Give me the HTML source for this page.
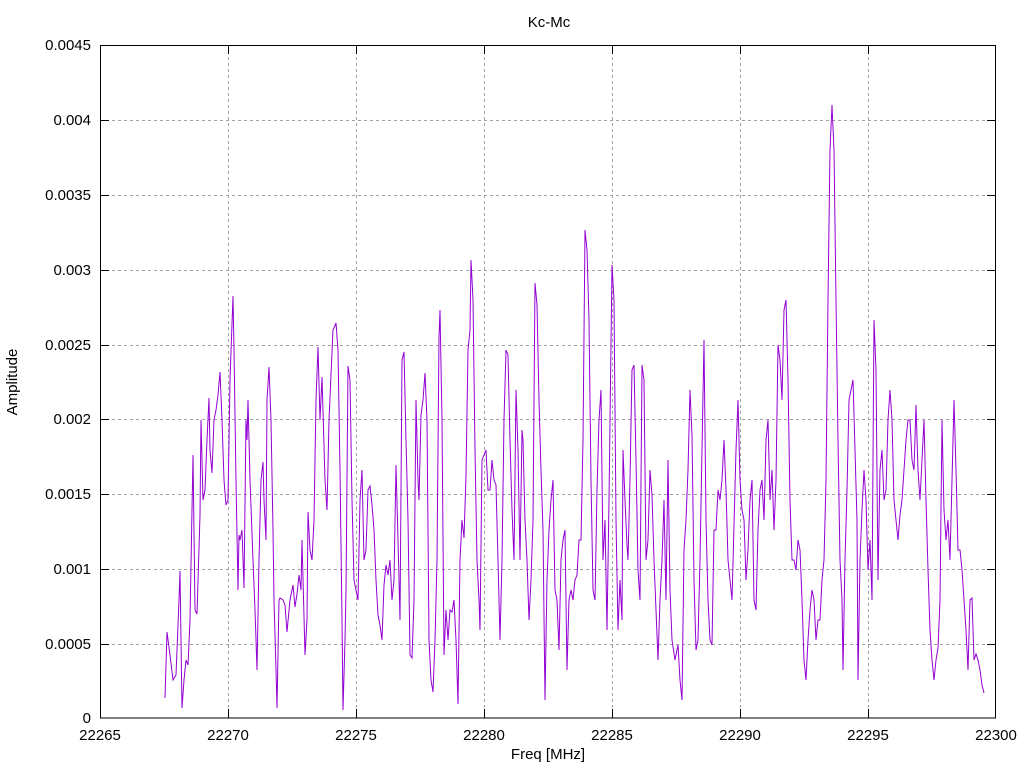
<!DOCTYPE html>
<html><head><meta charset="utf-8"><style>html,body{margin:0;padding:0;background:#fff}svg{display:block}text{font-family:"Liberation Sans",sans-serif;font-size:15px;fill:#000}</style></head><body>
<svg width="1024" height="768" viewBox="0 0 1024 768" xmlns="http://www.w3.org/2000/svg">
<g stroke="#a0a0a0" stroke-width="1" stroke-dasharray="3,3" fill="none">
<path d="M100 120.5H996M100 195.5H996M100 270.5H996M100 345.5H996M100 419.5H996M100 494.5H996M100 569.5H996M100 644.5H996"/>
<path d="M228.5 45V718M356.5 45V718M484.5 45V718M612.5 45V718M740.5 45V718M868.5 45V718"/>
</g>
<g stroke="#000" stroke-width="1" fill="none">
<rect x="100.5" y="45.5" width="895" height="672.5"/>
<path d="M100 120.5h9M100 195.5h9M100 270.5h9M100 345.5h9M100 419.5h9M100 494.5h9M100 569.5h9M100 644.5h9M996 120.5h-9M996 195.5h-9M996 270.5h-9M996 345.5h-9M996 419.5h-9M996 494.5h-9M996 569.5h-9M996 644.5h-9"/>
<path d="M228.5 718v-9M356.5 718v-9M484.5 718v-9M612.5 718v-9M740.5 718v-9M868.5 718v-9M228.5 45v9M356.5 45v9M484.5 45v9M612.5 45v9M740.5 45v9M868.5 45v9"/>
</g>
<g text-anchor="end">
<text x="91" y="50">0.0045</text><text x="91" y="125">0.004</text><text x="91" y="200">0.0035</text><text x="91" y="275">0.003</text><text x="91" y="350">0.0025</text><text x="91" y="424">0.002</text><text x="91" y="499">0.0015</text><text x="91" y="574">0.001</text><text x="91" y="649">0.0005</text><text x="91" y="723">0</text>
</g>
<g text-anchor="middle">
<text x="100" y="740">22265</text><text x="228" y="740">22270</text><text x="356" y="740">22275</text><text x="484" y="740">22280</text><text x="612" y="740">22285</text><text x="740" y="740">22290</text><text x="868" y="740">22295</text><text x="996" y="740">22300</text>
<text x="549" y="27">Kc-Mc</text>
<text x="548" y="759">Freq [MHz]</text>
<text x="17" y="382" transform="rotate(-90 17 382)">Amplitude</text>
</g>
<polyline fill="none" stroke="#9400d3" stroke-width="1" points="165,698 167,632 170,655 173,680 176,675 179,600 180,571 182,708 184,680 186,660 188,665 190,620 193,455 195,610 197,614 200,515 201,420 203,500 205,490 207,440 209,398 210,450 212,473 214,420 216,410 218,395 220,372 222,420 224,480 226,505 228,500 230,380 233,296 234,350 236,480 238,590 239,535 240,540 242,530 244,588 246,420 247,440 248,400 250,480 253,560 255,610 257,670 259,560 261,480 263,462 264,500 266,540 267,400 269,367 271,420 273,530 274,600 276,670 277,708 279,600 280,598 283,600 285,605 287,632 290,600 293,585 295,607 297,594 299,575 301,590 302,540 305,655 307,620 308,512 310,550 312,560 314,520 316,400 318,347 320,420 322,377 325,480 327,510 329,420 333,330 336,323 338,350 340,470 342,620 343,710 345,640 346,590 348,366 350,380 352,500 354,580 356,590 358,600 360,500 362,470 364,560 366,550 368,490 370,486 372,505 374,530 376,580 378,615 380,625 382,640 384,585 386,565 388,575 390,560 392,600 394,580 396,465 398,540 400,620 402,360 404,352 406,440 408,520 410,655 412,658 414,600 416,400 418,480 419,500 421,415 423,400 425,373 427,420 429,640 431,680 433,692 435,640 437,560 439,338 440,310 442,420 444,655 446,610 448,640 450,610 452,612 454,600 456,640 458,704 460,560 462,520 464,538 466,475 468,350 470,330 471,260 473,300 475,450 477,560 479,600 480,630 482,460 484,455 486,450 488,490 490,490 492,460 494,480 496,485 498,560 500,640 502,560 504,420 506,350 508,355 510,440 512,510 514,560 516,390 518,450 520,560 522,430 523,440 525,520 527,560 529,620 531,580 533,520 535,283 537,305 539,400 541,470 543,530 545,700 547,580 549,530 551,500 553,480 555,590 557,600 559,650 561,560 563,540 565,530 567,670 569,600 571,590 573,600 575,580 577,575 579,540 581,540 583,440 585,230 587,250 589,320 591,480 593,590 595,600 597,490 599,420 601,390 603,560 605,520 607,630 609,500 612,265 614,300 616,520 618,630 620,580 622,620 623,450 625,500 627,545 628,560 630,480 632,370 634,365 636,460 638,570 640,600 642,365 644,380 646,560 648,540 650,470 652,495 654,560 656,610 658,660 660,600 662,560 664,500 666,600 668,460 670,590 672,640 675,660 678,645 680,680 682,700 684,550 686,520 688,470 690,390 692,435 694,580 696,650 698,640 700,560 702,450 704,340 706,520 708,600 710,640 712,645 714,530 716,530 718,490 720,500 722,480 724,440 726,490 728,560 730,580 732,600 734,525 736,450 738,400 740,480 742,510 744,520 746,580 748,550 750,500 752,480 754,600 756,610 758,530 760,490 762,480 764,520 766,440 768,420 770,500 772,470 774,530 776,480 778,345 780,360 782,400 784,310 786,300 788,380 790,500 792,560 794,560 796,570 798,540 800,550 802,600 804,660 806,680 808,640 810,610 812,590 814,600 816,640 818,620 820,620 822,580 824,560 826,480 828,300 830,150 832,105 834,150 836,300 838,440 840,560 842,600 843,670 845,560 847,490 849,400 851,390 853,380 855,450 857,520 858,680 860,560 862,510 864,470 866,500 868,570 870,540 872,600 874,320 876,370 878,580 880,470 882,450 884,500 886,490 888,420 890,390 892,420 894,500 896,520 898,540 900,515 902,500 904,470 906,440 908,420 910,420 912,460 914,470 916,405 918,470 920,500 922,460 924,420 926,500 928,570 930,630 932,660 934,680 936,660 938,648 940,600 942,420 944,510 946,540 948,520 950,560 952,480 954,400 956,470 958,550 960,550 962,570 964,600 966,630 968,670 970,600 972,598 974,660 976,654 978,660 980,670 982,685 984,693"/>
</svg>
</body></html>
